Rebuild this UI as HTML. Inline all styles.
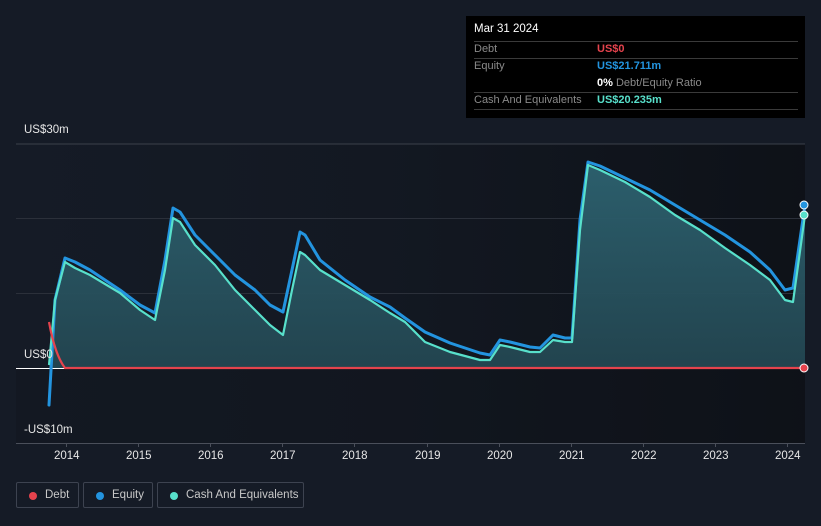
<!DOCTYPE html>
<html><head><meta charset="utf-8"><style>
html,body{margin:0;width:821px;height:526px;overflow:hidden}
body{background:#151b26;font-family:"Liberation Sans",sans-serif;position:relative}
.t{position:absolute;font-size:11.5px;color:#e6e6e6;white-space:nowrap}
.tip{position:absolute;left:466px;top:16px;width:339px;height:102px;background:#000}
.tip div{position:absolute;font-size:11px;white-space:nowrap}
.ln{position:absolute;left:8px;width:324px;height:1px;background:#3a3a3a}
.lg{position:absolute;top:482px;height:26px;border:1px solid #3d4350;border-radius:2px;font-size:11.5px;color:#c8c8c8;line-height:25px;box-sizing:border-box;white-space:nowrap}
.lg i{position:absolute;left:12px;top:9px;width:8px;height:8px;border-radius:50%}
</style></head><body>
<svg width="821" height="526" style="position:absolute;left:0;top:0">
<defs>
<linearGradient id="dk" x1="0" x2="1" y1="0" y2="0"><stop offset="0" stop-color="#0b0e13" stop-opacity="0"/><stop offset="0.45" stop-color="#0b0e13" stop-opacity="0.2"/><stop offset="1" stop-color="#0b0e13" stop-opacity="0.75"/></linearGradient>
<linearGradient id="cf" x1="0" x2="0" y1="0" y2="1"><stop offset="0" stop-color="#2d6270"/><stop offset="1" stop-color="#234651"/></linearGradient>
</defs>
<rect x="16" y="144" width="789" height="299" fill="url(#dk)"/>
<line x1="16" y1="144" x2="805" y2="144" stroke="#3b404a"/>
<line x1="16" y1="218.5" x2="805" y2="218.5" stroke="#2b303a"/>
<line x1="16" y1="293.5" x2="805" y2="293.5" stroke="#2b303a"/>
<line x1="16" y1="443.5" x2="805" y2="443.5" stroke="#4a4f5a"/>
<g stroke="#4a4f5a"><line x1="66.5" y1="443" x2="66.5" y2="447"/><line x1="138.5" y1="443" x2="138.5" y2="447"/><line x1="210.5" y1="443" x2="210.5" y2="447"/><line x1="282.5" y1="443" x2="282.5" y2="447"/><line x1="354.5" y1="443" x2="354.5" y2="447"/><line x1="427.5" y1="443" x2="427.5" y2="447"/><line x1="499.5" y1="443" x2="499.5" y2="447"/><line x1="571.5" y1="443" x2="571.5" y2="447"/><line x1="643.5" y1="443" x2="643.5" y2="447"/><line x1="715.5" y1="443" x2="715.5" y2="447"/><line x1="787.5" y1="443" x2="787.5" y2="447"/></g>
<path d="M49,368 L49,365 L55,300 L65,262 L75,268 L90,275 L120,293 L140,310 L155,320 L165,270 L173,218 L180,222 L195,245 L215,265 L235,290 L255,310 L270,325 L283,335 L292,290 L300,252 L305,255 L320,270 L345,285 L370,300 L390,313 L405,322 L425,342 L450,352 L480,360 L490,360 L500,345 L510,347 L530,352 L540,352 L553,340 L565,342 L572,342 L580,230 L588,165 L600,170 L625,182 L650,197 L675,215 L700,230 L725,248 L750,265 L770,280 L785,300 L793,302 L805,215 L805,368 Z" fill="url(#cf)" opacity="0.95"/>
<rect x="16" y="368" width="789" height="75" fill="#0f131a" opacity="0.3"/>
<line x1="16" y1="368.5" x2="805" y2="368.5" stroke="#ffffff"/>
<path d="M49,405 L55,300 L65,258 L75,262 L90,270 L120,290 L140,305 L155,313 L165,260 L173,208 L180,212 L195,235 L215,255 L235,275 L255,290 L270,305 L283,312 L292,270 L300,232 L305,235 L320,260 L345,280 L370,297 L390,307 L405,318 L425,332 L450,343 L480,353 L490,355 L500,340 L510,342 L530,347 L540,348 L553,335 L565,338 L572,338 L580,220 L588,162 L600,166 L625,178 L650,190 L675,205 L700,220 L725,235 L750,252 L770,270 L785,290 L793,288 L805,205" fill="none" stroke="#2394df" stroke-width="3" stroke-linejoin="round" stroke-linecap="round"/>
<path d="M49,365 L55,300 L65,262 L75,268 L90,275 L120,293 L140,310 L155,320 L165,270 L173,218 L180,222 L195,245 L215,265 L235,290 L255,310 L270,325 L283,335 L292,290 L300,252 L305,255 L320,270 L345,285 L370,300 L390,313 L405,322 L425,342 L450,352 L480,360 L490,360 L500,345 L510,347 L530,352 L540,352 L553,340 L565,342 L572,342 L580,230 L588,165 L600,170 L625,182 L650,197 L675,215 L700,230 L725,248 L750,265 L770,280 L785,300 L793,302 L805,215" fill="none" stroke="#58e0cb" stroke-width="2.2" stroke-linejoin="round"/>
<path d="M49,322 Q55,355 65,368 L805,368" fill="none" stroke="#e5434d" stroke-width="2.2"/>
<circle cx="804" cy="205" r="4" fill="#2394df" stroke="#fff" stroke-width="1"/>
<circle cx="804" cy="215" r="4" fill="#58e0cb" stroke="#fff" stroke-width="1"/>
<circle cx="804" cy="368" r="4" fill="#e5434d" stroke="#fff" stroke-width="1"/>
</svg>
<div class="t" style="left:24px;top:124px">US$30m</div>
<div class="t" style="left:24px;top:349px">US$0</div>
<div class="t" style="left:24px;top:424px">-US$10m</div>
<div class="t" style="left:54px;top:450px">2014</div>
<div class="t" style="left:126px;top:450px">2015</div>
<div class="t" style="left:198px;top:450px">2016</div>
<div class="t" style="left:270px;top:450px">2017</div>
<div class="t" style="left:342px;top:450px">2018</div>
<div class="t" style="left:415px;top:450px">2019</div>
<div class="t" style="left:487px;top:450px">2020</div>
<div class="t" style="left:559px;top:450px">2021</div>
<div class="t" style="left:631px;top:450px">2022</div>
<div class="t" style="left:703px;top:450px">2023</div>
<div class="t" style="left:775px;top:450px">2024</div>
<div class="tip">
<div style="left:8px;top:7px;color:#fff;font-size:11.5px">Mar 31 2024</div>
<div class="ln" style="top:25px"></div>
<div style="left:8px;top:27px;color:#8a8a8a">Debt</div><div style="left:131px;top:27px;color:#e5434d;font-weight:bold">US$0</div>
<div class="ln" style="top:42px"></div>
<div style="left:8px;top:44px;color:#8a8a8a">Equity</div><div style="left:131px;top:44px;color:#2394df;font-weight:bold">US$21.711m</div>
<div style="left:131px;top:61px;color:#8a8a8a"><b style="color:#fff">0%</b> Debt/Equity Ratio</div>
<div class="ln" style="top:76px"></div>
<div style="left:8px;top:78px;color:#8a8a8a">Cash And Equivalents</div><div style="left:131px;top:78px;color:#58e0cb;font-weight:bold">US$20.235m</div>
<div class="ln" style="top:93px"></div>
</div>
<div class="lg" style="left:16px;width:63px"><i style="background:#e5434d"></i><span style="margin-left:28px">Debt</span></div>
<div class="lg" style="left:83px;width:70px"><i style="background:#2394df"></i><span style="margin-left:28px">Equity</span></div>
<div class="lg" style="left:157px;width:147px"><i style="background:#58e0cb"></i><span style="margin-left:28px">Cash And Equivalents</span></div>
</body></html>
